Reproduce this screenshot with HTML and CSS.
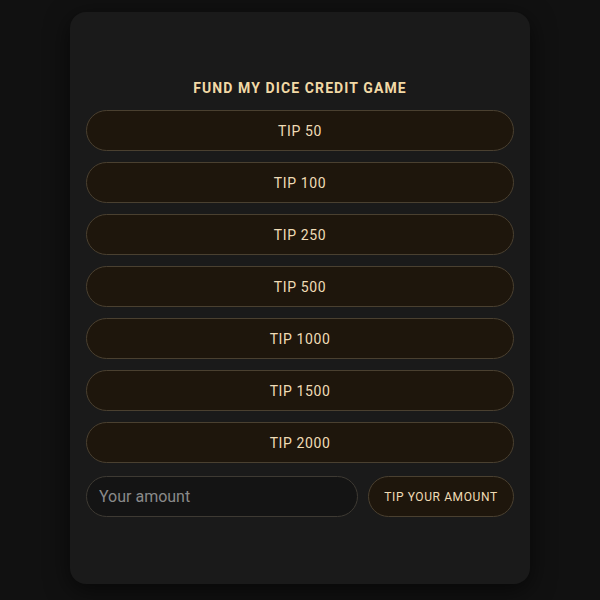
FILE: index.html
```html
<!DOCTYPE html>
<html>
<head>
<meta charset="utf-8">
<link rel="stylesheet" href="styles.css">
</head>
<body>
<div class="card">
  <h2 class="title">FUND MY DICE CREDIT GAME</h2>
  <div class="list">
    <button class="tip">TIP 50</button>
    <button class="tip">TIP 100</button>
    <button class="tip">TIP 250</button>
    <button class="tip">TIP 500</button>
    <button class="tip">TIP 1000</button>
    <button class="tip">TIP 1500</button>
    <button class="tip">TIP 2000</button>
    <div class="custom">
      <input class="amount" type="text" placeholder="Your amount">
      <button class="tip-custom">TIP YOUR AMOUNT</button>
    </div>
  </div>
</div>
</body>
</html>
```
FILE: styles.css
```css
html, body {
  margin: 0;
  padding: 0;
  background: #111111;
  font-family: Roboto, "Liberation Sans", sans-serif;
}
body {
  width: 600px;
  height: 600px;
  display: flex;
  justify-content: center;
  padding-top: 12px;
  box-sizing: border-box;
}
.card {
  width: 460px;
  height: 572px;
  box-sizing: border-box;
  background: #1a1a1a;
  border-radius: 16px;
  padding: 68px 16px 0;
  box-shadow: 0 6px 24px rgba(0,0,0,0.6);
}
.title {
  margin: 0 0 14px;
  text-align: center;
  color: #f2d9a6;
  font-size: 14px;
  font-weight: 700;
  letter-spacing: 1.1px;
  line-height: 16px;
}
.list {
  display: flex;
  flex-direction: column;
  gap: 11px;
}
.tip {
  height: 41px;
  width: 100%;
  background: #1e160c;
  border: 1px solid #4a4030;
  border-radius: 21px;
  color: #f0dcb6;
  font-family: Roboto, "Liberation Sans", sans-serif;
  font-size: 14px;
  letter-spacing: 0.6px;
  padding: 0;
}
.custom {
  display: flex;
  gap: 10px;
  margin-top: 2px;
}
.amount {
  width: 272px;
  height: 41px;
  box-sizing: border-box;
  background: #141414;
  border: 1px solid #3e3a33;
  border-radius: 21px;
  padding: 0 12px;
  color: #dddddd;
  font-family: Roboto, "Liberation Sans", sans-serif;
  font-size: 16px;
  outline: none;
}
.amount::placeholder {
  color: #8a8a8a;
}
.tip-custom {
  flex: 1;
  height: 41px;
  background: #1e160c;
  border: 1px solid #4a4030;
  border-radius: 21px;
  color: #f0dcb6;
  font-family: Roboto, "Liberation Sans", sans-serif;
  font-size: 12px;
  letter-spacing: 0.6px;
  padding: 0;
}
```
